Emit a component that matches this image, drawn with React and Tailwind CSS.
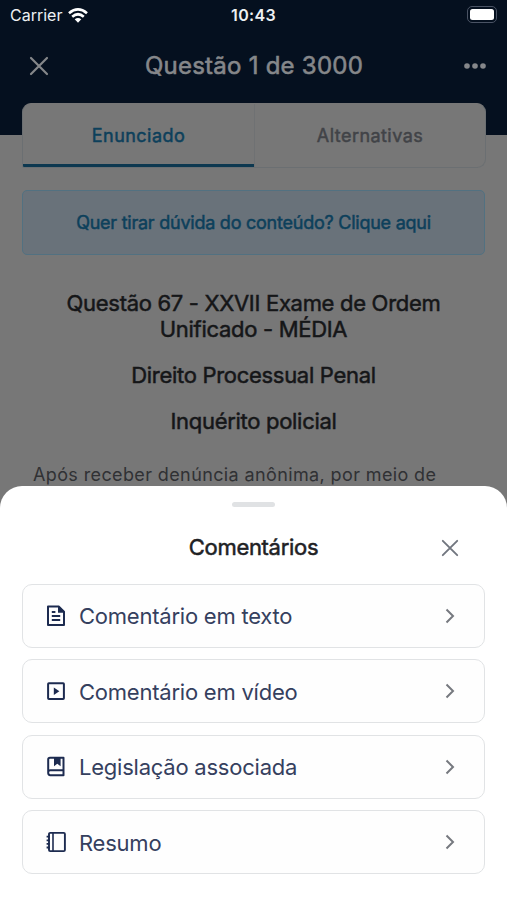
import React from 'react';

const TextIcon = () => (
  <svg width="20" height="22" viewBox="0 0 20 22" fill="none" stroke="currentColor" strokeWidth="2">
    <path d="M2 1.4h10.7L18 6.7v13.2H2z" strokeLinejoin="round" />
    <path d="M12 0.7v7h7z" fill="currentColor" stroke="none" />
    <path d="M5.8 7h3.6M5.8 11h8.4M5.8 15h8.4" strokeWidth="1.8" />
  </svg>
);

const VideoIcon = () => (
  <svg width="20" height="22" viewBox="0 0 20 22" fill="none" stroke="currentColor" strokeWidth="2">
    <rect x="2.1" y="3.3" width="15.8" height="15.8" rx="0.8" />
    <path d="M7.8 7.5v7.4l5.6-3.7z" fill="currentColor" stroke="none" />
  </svg>
);

const BookIcon = () => (
  <svg width="20" height="22" viewBox="0 0 20 22" fill="none" stroke="currentColor" strokeWidth="2">
    <path d="M17.5 14.2V1.7H4Q2.2 1.7 2.2 3.5v13.6Q2.2 19.2 4.3 19.2h13.2v-5H4.3Q2.2 14.2 2.2 16.5" strokeLinejoin="round" />
    <path d="M8 1.7h6.6v8.5l-3.3-2.4L8 10.2z" fill="currentColor" stroke="none" />
  </svg>
);

const NotebookIcon = () => (
  <svg width="20" height="22" viewBox="0 0 20 22" fill="none" stroke="currentColor" strokeWidth="1.9">
    <rect x="3" y="1.9" width="15.9" height="18.2" rx="1.2" />
    <path d="M7 2v18" strokeWidth="1.6" />
    <path d="M0.6 5.7h3M0.6 9.3h3M0.6 12.9h3M0.6 16.5h3" strokeWidth="1.8" />
  </svg>
);

const CloseIcon = ({ size, width }) => (
  <svg width={size} height={size} viewBox="0 0 20 20" fill="none" stroke="currentColor" strokeWidth={width} strokeLinecap="round">
    <path d="M2 2l16 16M18 2L2 18" />
  </svg>
);

const options = [
  { label: 'Comentário em texto', icon: TextIcon },
  { label: 'Comentário em vídeo', icon: VideoIcon },
  { label: 'Legislação associada', icon: BookIcon },
  { label: 'Resumo', icon: NotebookIcon },
];

const StatusBar = () => (
  <div className="h-[30px] px-[10px] grid grid-cols-3 items-center text-[#eef0f3]">
    <div className="flex items-center gap-[6px] text-[16px]">
      Carrier
      <svg width="20" height="15" viewBox="0 0 20 15" fill="none" stroke="#fff" strokeWidth="2.7">
        <path d="M1 5.2Q10-2.4 19 5.2M4.2 8.7Q10 3.8 15.8 8.7" />
        <path d="M6.7 11.3Q10 8.5 13.3 11.3L10 14.8z" fill="#fff" stroke="none" />
      </svg>
    </div>
    <div className="text-center text-[16px] font-semibold tracking-[0.3px]">10:43</div>
    <div className="flex justify-end">
      <div className="w-[30px] h-[17px] mt-[-2px] rounded-[5px] border-[1.5px] border-[#4a5364] p-[2px] flex">
        <div className="flex-1 rounded-[2.5px] bg-white" />
      </div>
    </div>
  </div>
);

const CommentsSheet = () => (
  <div className="absolute inset-x-0 bottom-0 h-[414px] rounded-t-[22px] bg-white px-[22px] pt-4">
    <div className="w-[43px] h-[5px] mx-auto rounded-full bg-[#e0e2e4]" />
    <div className="grid grid-cols-[40px_1fr_40px] items-center mt-[24px] h-8">
      <span />
      <h2 className="text-center text-[22px] tracking-[-0.3px] [-webkit-text-stroke:0.5px] text-[#202124]">Comentários</h2>
      <button className="text-[#71767f] justify-self-start ml-[-4px]">
        <CloseIcon size={18} width={2.1} />
      </button>
    </div>
    <div className="mt-[20.5px] flex flex-col gap-[11.5px]">
      {options.map(({ label, icon: Icon }) => (
        <button
          key={label}
          className="h-16 flex items-center rounded-[10px] border border-[#e1e3e5] bg-[#fefefe] pl-[23px] pr-[29px] text-[#1d2b50]"
        >
          <Icon />
          <span className="ml-[13px] mt-[1px] flex-1 text-left text-[22px] leading-[28px] tracking-[-0.23px] text-[#35405e]">{label}</span>
          <svg width="10" height="16" viewBox="0 0 10 16" fill="none" stroke="#76797f" strokeWidth="2">
            <path d="M1.5 1.5L8 8l-6.5 6.5" />
          </svg>
        </button>
      ))}
    </div>
  </div>
);

const App = () => {
  return (
    <div className="relative w-[507px] h-[900px] overflow-hidden bg-[#777777] font-['Inter',sans-serif]">
      <header className="h-[135px] bg-[#05101f]">
        <StatusBar />
        <div className="h-[72px] pl-[29px] pr-[20px] flex items-center justify-between text-[#85878a]">
          <CloseIcon size={20} width={2.2} />
          <h1 className="mr-[4px] text-[24px] tracking-[0.25px] [-webkit-text-stroke:0.6px]">Questão 1 de 3000</h1>
          <svg width="24" height="8" viewBox="0 0 24 8" fill="currentColor">
            <circle cx="4" cy="4" r="2.8" />
            <circle cx="12" cy="4" r="2.8" />
            <circle cx="20" cy="4" r="2.8" />
          </svg>
        </div>
      </header>

      <main className="relative -mt-8 px-[22px]">
        <div className="h-[65px] mr-[-1px] grid grid-cols-2 overflow-hidden rounded-[9px] rounded-bl-[2px] bg-[#777777] border border-[#6b6f72] border-t-[#777777] text-[18px] tracking-[0.45px] [-webkit-text-stroke:0.5px]">
          <div className="flex items-center justify-center border-b-[3px] border-[#0d3850] pt-[2px] text-[#0d405b]">
            Enunciado
          </div>
          <div className="flex items-center justify-center border-l border-[#6f7173] pb-[1px] text-[#414347]">
            Alternativas
          </div>
        </div>

        <div className="mt-[22px] h-[65px] flex items-center justify-center rounded-[5px] border border-[#527181] bg-[#69727a] text-[18px] tracking-[-0.24px] [-webkit-text-stroke:0.5px] text-[#0d405b]">
          Quer tirar dúvida do conteúdo? Clique aqui
        </div>

        <div className="mt-[35px] flex flex-col gap-5 text-center text-[22px] leading-[26px] tracking-[-0.3px] [-webkit-text-stroke:0.5px] text-[#151618]">
          <p>
            Questão 67 - XXVII Exame de Ordem
            <br />
            Unificado - MÉDIA
          </p>
          <p>Direito Processual Penal</p>
          <p>Inquérito policial</p>
        </div>

        <p className="mt-7 pl-[11px] text-[18px] leading-[26px] tracking-[0.38px] whitespace-nowrap text-[#303134]">
          Após receber denúncia anônima, por meio de
        </p>
      </main>

      <CommentsSheet />
    </div>
  );
};

export default App;
